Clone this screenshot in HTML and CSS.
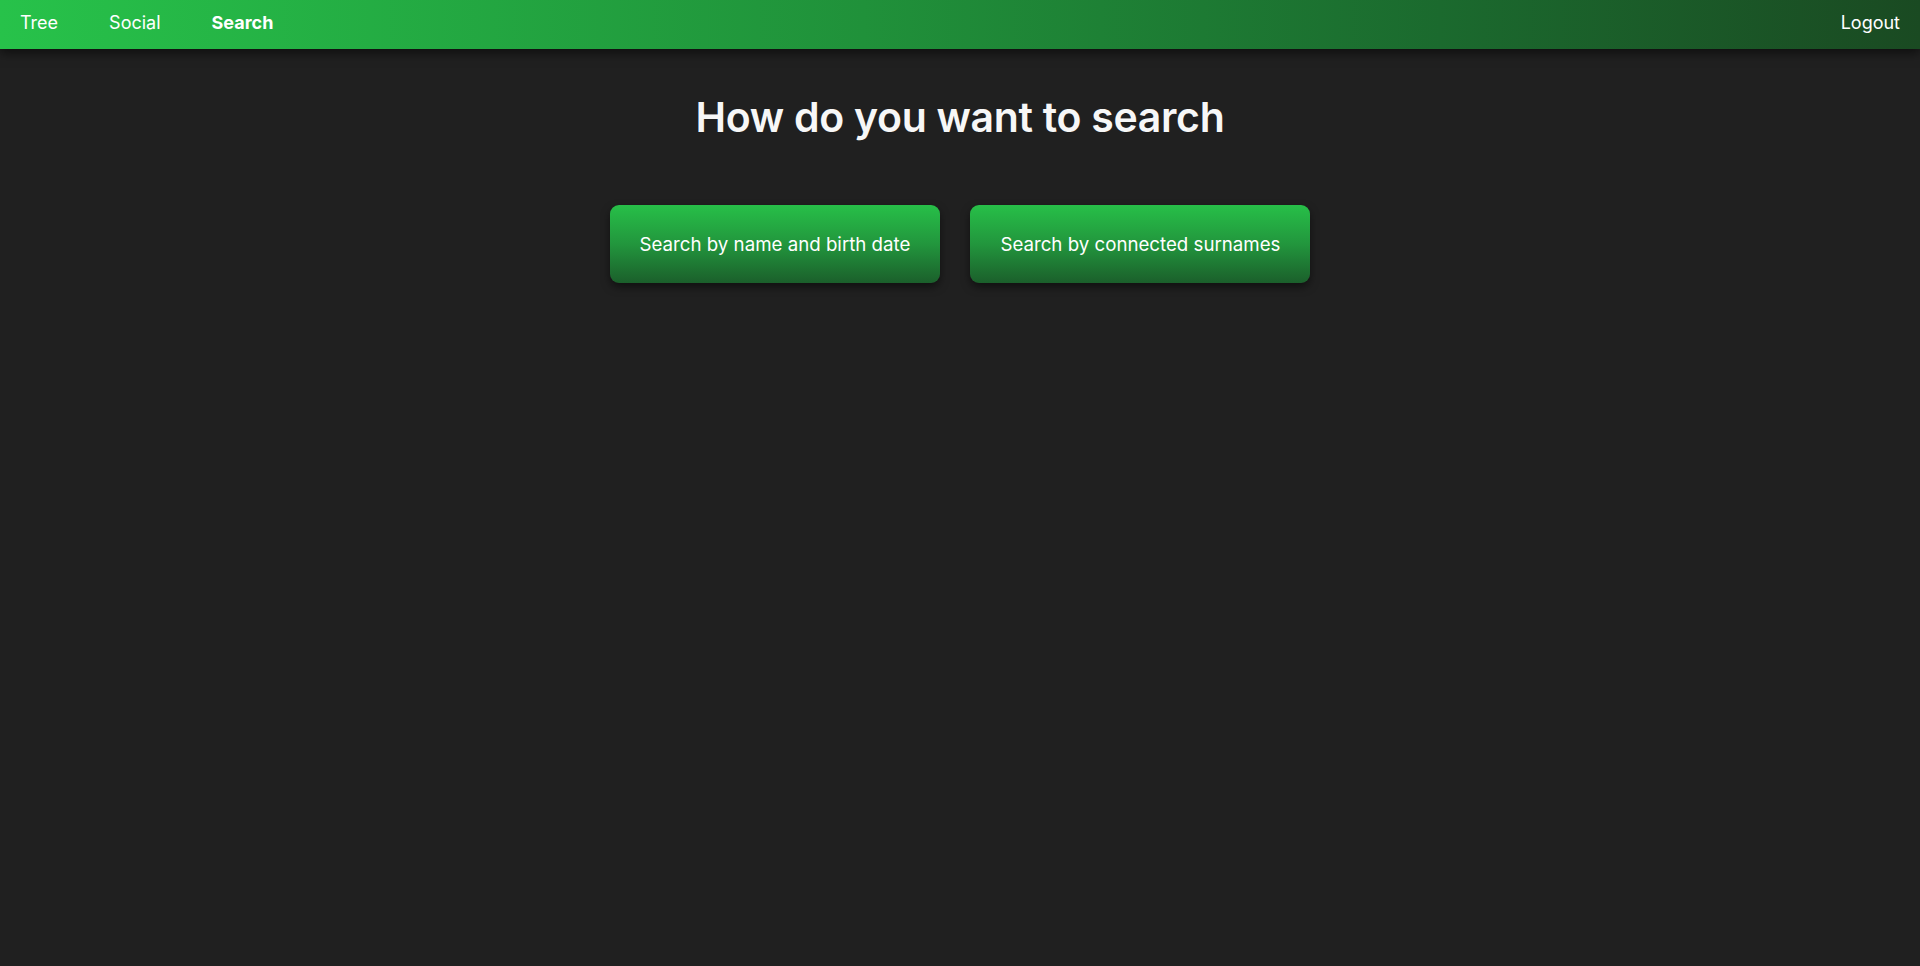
FILE: index.html
```html
<!DOCTYPE html>
<html>
<head>
<meta charset="utf-8">
<link rel="stylesheet" href="styles.css">
</head>
<body>
<nav class="topbar">
  <div class="nav-left">
    <a class="nav-link">Tree</a>
    <a class="nav-link">Social</a>
    <a class="nav-link active">Search</a>
  </div>
  <a class="nav-link">Logout</a>
</nav>
<main class="content">
  <h1 class="title">How do you want to search</h1>
  <div class="choices">
    <button class="choice">Search by name and birth date</button>
    <button class="choice">Search by connected surnames</button>
  </div>
</main>
</body>
</html>
```
FILE: styles.css
```css
html, body {
  margin: 0;
  height: 100%;
  background: #202020;
  font-family: Inter, "Noto Sans", sans-serif;
  color: #fff;
}
.topbar {
  height: 49px;
  box-sizing: border-box;
  display: flex;
  align-items: center;
  justify-content: space-between;
  padding: 0 20px 4px;
  background: linear-gradient(90deg, #27c24a 0%, #20913a 45%, #1b6a2e 75%, #1a4a22 100%);
  box-shadow: 0 4px 10px rgba(0,0,0,0.55);
  position: relative;
}
.nav-left {
  display: flex;
  gap: 51px;
}
.nav-link {
  font-size: 18px;
  color: #fff;
  cursor: pointer;
}
.nav-link.active {
  font-weight: 700;
}
.content {
  display: flex;
  flex-direction: column;
  align-items: center;
}
.title {
  margin: 43px 0 0;
  font-size: 41px;
  font-weight: 600;
  letter-spacing: -0.3px;
  color: #f7f7f7;
}
.choices {
  display: flex;
  gap: 30px;
  margin-top: 63px;
}
.choice {
  height: 78px;
  padding: 0 30px;
  border: none;
  border-radius: 9px;
  background: linear-gradient(180deg, #27bf48 0%, #22963d 50%, #1b5f2b 100%);
  color: #fff;
  font-family: inherit;
  font-size: 18.7px;
  box-shadow: 0 4px 8px rgba(0,0,0,0.5);
  cursor: pointer;
}
```
